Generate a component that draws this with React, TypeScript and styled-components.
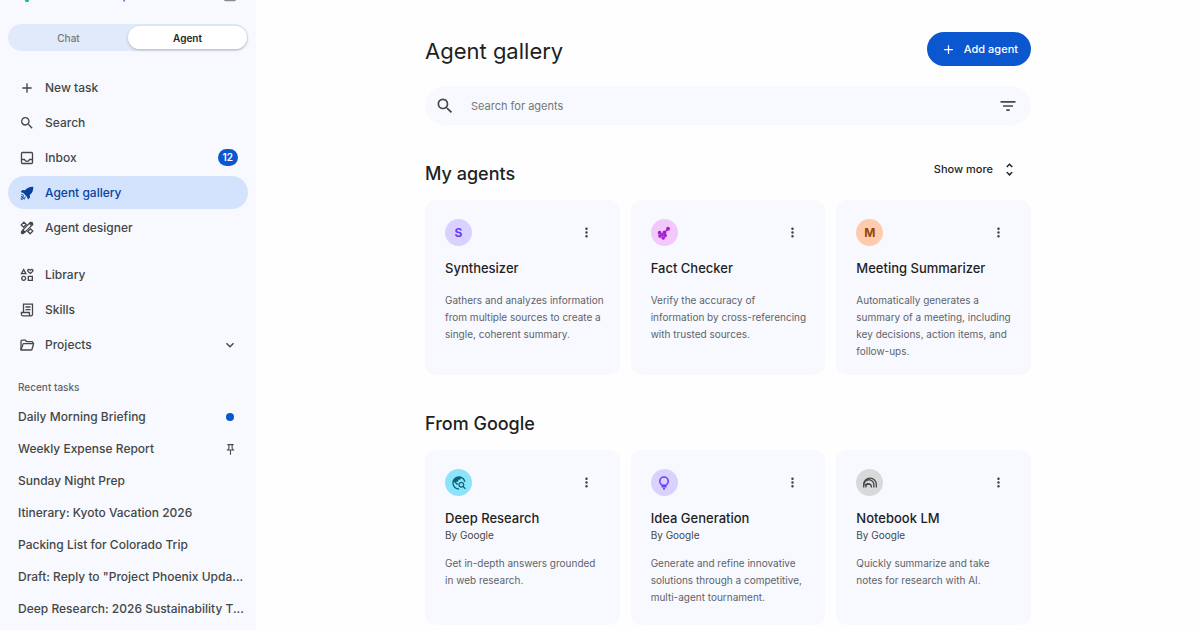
import React from "react";
import styled, { createGlobalStyle, css } from "styled-components";
import type { IconType } from "react-icons";
import {
  MdAdd,
  MdExpandMore,
  MdFilterList,
  MdMoreVert,
  MdOutlineInterests,
  MdOutlinePushPin,
  MdSearch,
  MdTravelExplore,
  MdUnfoldMore,
} from "react-icons/md";

const GlobalStyle = createGlobalStyle`
  *, *::before, *::after { box-sizing: border-box; }
  body {
    margin: 0;
    background: #fefefe;
    color: #1f1f1f;
    font-family: Inter, "Liberation Sans", sans-serif;
  }
  h1, h2, h3, p, ul { margin: 0; padding: 0; }
  ul { list-style: none; }
  a { color: inherit; text-decoration: none; }
  button {
    margin: 0;
    padding: 0;
    border: 0;
    background: none;
    color: inherit;
    font: inherit;
    cursor: pointer;
  }
  svg { display: block; flex: none; }
`;

/* ---------- icons ---------- */

type GlyphProps = { size?: number };

const InboxGlyph = ({ size = 16 }: GlyphProps) => (
  <svg width={size} height={size} viewBox="0 0 16 16" fill="none" stroke="currentColor" strokeWidth="1.3">
    <rect x="2.500" y="2.500" width="11" height="11" rx="1" />
    <path d="M2.500 9.500h3c.4 1.200 1.300 1.800 2.500 1.800s2.100-.6 2.500-1.800h3" />
  </svg>
);

const RocketGlyph = ({ size = 16 }: GlyphProps) => (
  <svg width={size} height={size} viewBox="0 0 16 16" fill="currentColor">
    <path d="M14.300 1.700c-4-.1-6.300 1.200-8.300 3.500L3.400 5 1.600 6.900l2.700 1.200 3.600 3.600 1.200 2.700 1.900-1.800-.2-2.600c2.300-2 3.600-4.300 3.500-8.300Z" />
    <path
      d="M2.300 9.700c1.700-.5 2.500.5 2 1.700s-2.400 1.700-2.400 2.500 1.700.2 2.600-.3 1.900-1 2-2M2 11l4 3.300"
      fill="none"
      stroke="currentColor"
      strokeWidth="1"
    />
  </svg>
);

const DesignerGlyph = ({ size = 16 }: GlyphProps) => (
  <svg width={size} height={size} viewBox="0 0 16 16" fill="none" stroke="currentColor" strokeWidth="1.3">
    <path d="M4.900 2.200 2.200 4.900 4.500 7.200 7.200 4.500ZM8.800 11.500l2.300 2.300 2.700-2.700-2.300-2.300Z" />
    <path d="M11.400 2.400 13.600 4.600 6 12.200 3.800 10ZM3.800 10l-.5 2.700 2.700-.5" />
    <circle cx="12.300" cy="3.700" r="1.300" />
    <circle cx="3.700" cy="12.300" r="1.300" />
  </svg>
);

const SkillsGlyph = ({ size = 16 }: GlyphProps) => (
  <svg width={size} height={size} viewBox="0 0 16 16" fill="none" stroke="currentColor" strokeWidth="1.300">
    <path d="M4.500 10.500V2.200h9v10a1.600 1.600 0 0 1-1.600 1.600H4a1.600 1.600 0 0 1-1.600-1.600v-1.700h8v1.700a1.500 1.500 0 0 0 1.500 1.600M6.500 5h5M6.500 7.600h5" />
  </svg>
);

const FolderGlyph = ({ size = 16 }: GlyphProps) => (
  <svg
    width={size}
    height={size}
    viewBox="0 0 16 16"
    fill="none"
    stroke="currentColor"
    strokeWidth="1.300"
    strokeLinejoin="round"
  >
    <path d="M2 13V4.200c0-.6.400-1 1-1h3.400l1.400 1.500H13c.6 0 1 .4 1 1v1" />
    <path d="M2 13l1.900-5.600c.1-.4.400-.7.900-.7h9.800L13 12.300c-.1.400-.5.700-.9.700Z" />
  </svg>
);

const MoleculeGlyph = ({ size = 14 }: GlyphProps) => (
  <svg width={size} height={size} viewBox="0 0 14 14" fill="currentColor">
    <path d="m8 6 3-3" stroke="currentColor" strokeWidth="1.200" />
    <circle cx="11" cy="2.800" r="2" />
    <circle cx="7.500" cy="6.400" r="1.900" />
    <circle cx="2.600" cy="6.700" r="1.900" />
    <circle cx="8.200" cy="9.600" r="1.800" />
    <circle cx="6.200" cy="12" r="1.800" />
    <circle cx="3" cy="10.100" r="1.800" />
    <circle cx="5.300" cy="8.700" r="1.600" />
  </svg>
);

const BulbGlyph = ({ size = 16 }: GlyphProps) => (
  <svg width={size} height={size} viewBox="0 0 16 16" fill="none" stroke="currentColor" strokeWidth="1.600">
    <circle cx="8" cy="6.200" r="4.200" />
    <path d="M6.300 9.900v1.900h3.400V9.900M7 13.800h2" />
  </svg>
);

const NotebookGlyph = ({ size = 14 }: GlyphProps) => (
  <svg width={size} height={size} viewBox="0 0 14 14" fill="none" stroke="currentColor" strokeWidth="1.300">
    <path d="M.7 11.500V8.500a6.300 6.300 0 0 1 12.600 0v3" />
    <path d="M1 7.900a4.900 4.900 0 0 1 9.800 1.600v2" />
    <path d="M2.800 11.500v-.6a2.800 2.800 0 0 1 5.600 0v.6" />
    <path d="M1.500 9.400a4 4 0 0 1 5.500-1" />
  </svg>
);

const SparkGlyph = ({ size = 16 }: GlyphProps) => (
  <svg width={size} height={size} viewBox="0 0 16 16" fill="#1fb97a">
    <path d="M8 0c1.600 4 4 6.400 8 8-4 1.600-5.500 4-6.600 8H6.600C5.500 12 4 9.600 0 8c4-1.600 6.400-4 8-8Z" />
  </svg>
);

const PanelGlyph = ({ size = 14 }: GlyphProps) => (
  <svg width={size} height={size} viewBox="0 0 14 14" fill="none" stroke="#8a8d90" strokeWidth="1.300">
    <rect x="1.500" y="1.500" width="11" height="11" rx="1" />
    <path d="M5.500 1.500v11" />
  </svg>
);

/* ---------- layout ---------- */

const Shell = styled.div`
  display: flex;
  height: 100vh;
  overflow: hidden;
`;

const Sidebar = styled.aside`
  flex: none;
  width: 256px;
  padding: 0 8px;
  background: #f7f9fe;
  color: #444746;
  overflow: hidden;
`;

const BrandBar = styled.header`
  display: flex;
  align-items: flex-end;
  gap: 9px;
  height: 3px;
  margin-bottom: 21px;
  padding: 0 11px 1px;
  overflow: hidden;
  font-size: 13px;
  line-height: 16px;
`;

const BrandName = styled.span`
  flex: 1;
`;

const Switcher = styled.div`
  display: flex;
  height: 27px;
  padding: 2px 1px;
  border-radius: 14px;
  background: #e1eafb;
`;

const SwitchTab = styled.button<{ $active?: boolean }>`
  flex: 1;
  border-radius: 12px;
  color: #747775;
  font-size: 10px;
  font-weight: 500;
  line-height: 16px;
  ${({ $active }) =>
    $active &&
    css`
      background: #fff;
      color: #1f1f1f;
      font-weight: 600;
      box-shadow: 0 1px 3px rgba(60, 64, 67, 0.3);
    `}
`;

const NavList = styled.ul<{ $gap: number }>`
  display: grid;
  gap: 2px;
  margin-top: ${({ $gap }) => $gap}px;
`;

const NavLink = styled.a<{ $active?: boolean }>`
  display: flex;
  align-items: center;
  gap: 10px;
  height: 33px;
  padding: 0 10px 0 11px;
  border-radius: 17px;
  font-size: 12px;
  font-weight: 500;
  line-height: 16px;
  ${({ $active }) =>
    $active &&
    css`
      background: #d3e3fd;
      color: #0842a0;
    `}
`;

const NavLabel = styled.span`
  flex: 1;
`;

const CountBadge = styled.span`
  padding: 0 5px;
  border-radius: 9px;
  background: #0b57d0;
  color: #fff;
  font-size: 10px;
  font-weight: 600;
  line-height: 17px;
`;

const SectionLabel = styled.h2`
  margin-top: 18px;
  padding-left: 10px;
  color: #5f6368;
  font-size: 10px;
  font-weight: 500;
  line-height: 16px;
`;

const TaskList = styled.ul`
  margin-top: 6px;
`;

const TaskLink = styled.a`
  display: flex;
  align-items: center;
  justify-content: space-between;
  height: 32px;
  padding: 0 10px;
  font-size: 12px;
  font-weight: 500;
  line-height: 16px;
  white-space: nowrap;
`;

const TaskMark = styled.span`
  display: grid;
  place-items: center;
  width: 16px;
`;

const UnreadDot = styled.span`
  width: 8px;
  height: 8px;
  border-radius: 50%;
  background: #0b57d0;
`;

const Main = styled.main`
  flex: 1;
  min-width: 0;
  overflow: hidden;
  padding: 32px 24px 5px;
`;

const Content = styled.div`
  max-width: 606px;
  margin: 0 auto;
`;

const TitleRow = styled.div`
  display: flex;
  align-items: flex-start;
  justify-content: space-between;
`;

const PageTitle = styled.h1`
  padding-top: 4px;
  font-size: 22px;
  font-weight: 400;
  line-height: 30px;
`;

const AddButton = styled.button`
  display: flex;
  align-items: center;
  gap: 8px;
  height: 34px;
  padding: 0 13px 0 14px;
  border-radius: 17px;
  background: #0b57d0;
  color: #fff;
  font-size: 11px;
  font-weight: 500;
`;

const SearchBar = styled.label`
  display: flex;
  align-items: center;
  gap: 16px;
  height: 39px;
  margin-top: 20px;
  padding: 0 13px 0 10px;
  border-radius: 20px;
  background: #f7f9fe;
  color: #444746;
`;

const SearchInput = styled.input`
  flex: 1;
  min-width: 0;
  padding: 0;
  border: 0;
  outline: 0;
  background: none;
  color: #1f1f1f;
  font: 400 11px/16px Inter, "Liberation Sans", sans-serif;
  &::placeholder {
    color: #747775;
    opacity: 1;
  }
`;

const Section = styled.section`
  margin-top: 35px;
`;

const SectionHead = styled.div`
  display: flex;
  align-items: flex-start;
  justify-content: space-between;
`;

const SectionTitle = styled.h2`
  padding-top: 2px;
  font-size: 18px;
  font-weight: 500;
  line-height: 24px;
`;

const ShowMore = styled.button`
  display: flex;
  align-items: center;
  gap: 8px;
  padding-right: 13px;
  font-size: 11px;
  font-weight: 500;
  line-height: 18px;
`;

const CardGrid = styled.div`
  display: grid;
  grid-template-columns: repeat(3, minmax(0, 1fr));
  gap: 11px;
  margin-top: 14px;
`;

const Card = styled.article`
  min-height: 175px;
  padding: 19px 16px 15px 20px;
  border-radius: 11px;
  background: #f7f9fe;
`;

const CardTop = styled.div`
  display: flex;
  align-items: center;
  justify-content: space-between;
`;

const Avatar = styled.span<{ $bg: string; $fg: string }>`
  display: grid;
  place-items: center;
  width: 27px;
  height: 27px;
  border-radius: 50%;
  background: ${({ $bg }) => $bg};
  color: ${({ $fg }) => $fg};
  font-size: 12px;
  font-weight: 700;
`;

const MenuButton = styled.button`
  display: grid;
  place-items: center;
  width: 34px;
  height: 24px;
  color: #444746;
`;

const CardTitle = styled.h3`
  margin-top: 13px;
  font-size: 13px;
  font-weight: 500;
  line-height: 18px;
`;

const Byline = styled.p`
  color: #444746;
  font-size: 10px;
  line-height: 16px;
`;

const Description = styled.p<{ $gap: number }>`
  margin-top: ${({ $gap }) => $gap}px;
  color: #5f6368;
  font-size: 10px;
  line-height: 17px;
`;

/* ---------- data ---------- */

type NavItem = {
  label: string;
  icon: IconType | React.FC<GlyphProps>;
  active?: boolean;
  count?: number;
  expandable?: boolean;
};

const primaryNav: NavItem[] = [
  { label: "New task", icon: MdAdd },
  { label: "Search", icon: MdSearch },
  { label: "Inbox", icon: InboxGlyph, count: 12 },
  { label: "Agent gallery", icon: RocketGlyph, active: true },
  { label: "Agent designer", icon: DesignerGlyph },
];

const libraryNav: NavItem[] = [
  { label: "Library", icon: MdOutlineInterests },
  { label: "Skills", icon: SkillsGlyph },
  { label: "Projects", icon: FolderGlyph, expandable: true },
];

const tasks: { name: string; mark?: "unread" | "pinned" }[] = [
  { name: "Daily Morning Briefing", mark: "unread" },
  { name: "Weekly Expense Report", mark: "pinned" },
  { name: "Sunday Night Prep" },
  { name: "Itinerary: Kyoto Vacation 2026" },
  { name: "Packing List for Colorado Trip" },
  { name: 'Draft: Reply to "Project Phoenix Upda...' },
  { name: "Deep Research: 2026 Sustainability T..." },
];

type Agent = {
  name: string;
  by?: string;
  text: string;
  bg: string;
  fg: string;
  badge: React.ReactNode;
};

const myAgents: Agent[] = [
  {
    name: "Synthesizer",
    text: "Gathers and analyzes information from multiple sources to create a single, coherent summary.",
    bg: "#d9d2ff",
    fg: "#6b3df5",
    badge: "S",
  },
  {
    name: "Fact Checker",
    text: "Verify the accuracy of information by cross-referencing with trusted sources.",
    bg: "#f3c8fb",
    fg: "#a41fd0",
    badge: <MoleculeGlyph />,
  },
  {
    name: "Meeting Summarizer",
    text: "Automatically generates a summary of a meeting, including key decisions, action items, and follow-ups.",
    bg: "#ffcbae",
    fg: "#94490a",
    badge: "M",
  },
];

const googleAgents: Agent[] = [
  {
    name: "Deep Research",
    by: "By Google",
    text: "Get in-depth answers grounded in web research.",
    bg: "#8ce4fb",
    fg: "#0b6577",
    badge: <MdTravelExplore size={16} />,
  },
  {
    name: "Idea Generation",
    by: "By Google",
    text: "Generate and refine innovative solutions through a competitive, multi-agent tournament.",
    bg: "#d9d2ff",
    fg: "#6b3df5",
    badge: <BulbGlyph />,
  },
  {
    name: "Notebook LM",
    by: "By Google",
    text: "Quickly summarize and take notes for research with AI.",
    bg: "#d8d9da",
    fg: "#444746",
    badge: <NotebookGlyph />,
  },
];

/* ---------- parts ---------- */

const Nav = ({ items, gap }: { items: NavItem[]; gap: number }) => (
  <NavList $gap={gap}>
    {items.map(({ label, icon: Icon, active, count, expandable }) => (
      <li key={label}>
        <NavLink href="#" $active={active} aria-current={active ? "page" : undefined}>
          <Icon size={16} />
          <NavLabel>{label}</NavLabel>
          {count && <CountBadge>{count}</CountBadge>}
          {expandable && <MdExpandMore size={16} />}
        </NavLink>
      </li>
    ))}
  </NavList>
);

const AgentCard = ({ agent }: { agent: Agent }) => (
  <Card>
    <CardTop>
      <Avatar $bg={agent.bg} $fg={agent.fg}>
        {agent.badge}
      </Avatar>
      <MenuButton aria-label={`${agent.name} options`}>
        <MdMoreVert size={15} />
      </MenuButton>
    </CardTop>
    <CardTitle>{agent.name}</CardTitle>
    {agent.by && <Byline>{agent.by}</Byline>}
    <Description $gap={agent.by ? 12 : 15}>{agent.text}</Description>
  </Card>
);

export default function App() {
  return (
    <>
      <GlobalStyle />
      <Shell>
        <Sidebar>
          <BrandBar>
            <SparkGlyph />
            <BrandName>Gemini Enterprise</BrandName>
            <PanelGlyph />
          </BrandBar>
          <Switcher>
            <SwitchTab>Chat</SwitchTab>
            <SwitchTab $active>Agent</SwitchTab>
          </Switcher>
          <nav>
            <Nav items={primaryNav} gap={20} />
            <Nav items={libraryNav} gap={14} />
          </nav>
          <SectionLabel>Recent tasks</SectionLabel>
          <TaskList>
            {tasks.map(({ name, mark }) => (
              <li key={name}>
                <TaskLink href="#">
                  {name}
                  {mark && (
                    <TaskMark>{mark === "unread" ? <UnreadDot /> : <MdOutlinePushPin size={13} />}</TaskMark>
                  )}
                </TaskLink>
              </li>
            ))}
          </TaskList>
        </Sidebar>
        <Main>
          <Content>
            <TitleRow>
              <PageTitle>Agent gallery</PageTitle>
              <AddButton>
                <MdAdd size={15} />
                Add agent
              </AddButton>
            </TitleRow>
            <SearchBar>
              <MdSearch size={20} />
              <SearchInput type="search" placeholder="Search for agents" aria-label="Search for agents" />
              <MdFilterList size={20} />
            </SearchBar>
            <Section>
              <SectionHead>
                <SectionTitle>My agents</SectionTitle>
                <ShowMore>
                  Show more
                  <MdUnfoldMore size={17} />
                </ShowMore>
              </SectionHead>
              <CardGrid>
                {myAgents.map((agent) => (
                  <AgentCard key={agent.name} agent={agent} />
                ))}
              </CardGrid>
            </Section>
            <Section>
              <SectionHead>
                <SectionTitle>From Google</SectionTitle>
              </SectionHead>
              <CardGrid>
                {googleAgents.map((agent) => (
                  <AgentCard key={agent.name} agent={agent} />
                ))}
              </CardGrid>
            </Section>
          </Content>
        </Main>
      </Shell>
    </>
  );
}
